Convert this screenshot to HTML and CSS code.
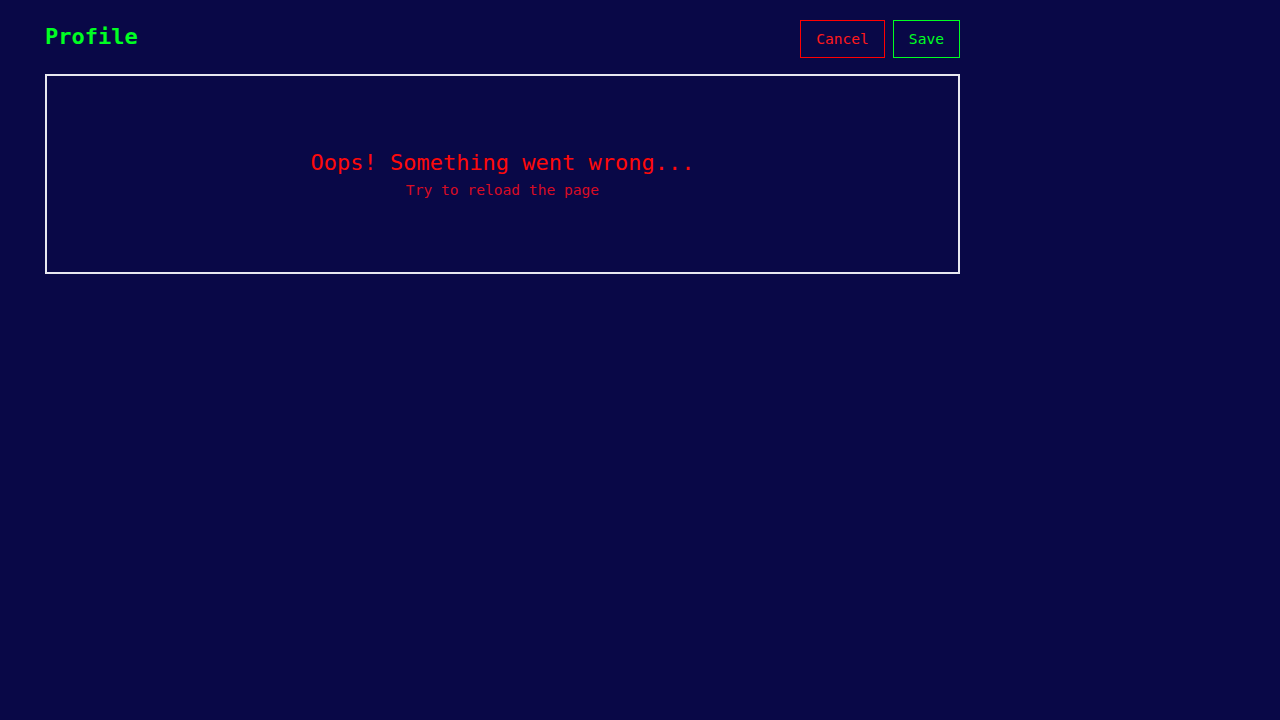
FILE: index.html
```html
<!DOCTYPE html>
<html>
<head>
<meta charset="utf-8">
<link rel="stylesheet" href="styles.css">
</head>
<body>
<div class="page">
  <header class="header">
    <h1 class="title">Profile</h1>
    <div class="actions">
      <button class="btn btn-cancel">Cancel</button>
      <button class="btn btn-save">Save</button>
    </div>
  </header>
  <section class="card">
    <div class="error">
      <div class="error-title">Oops! Something went wrong...</div>
      <div class="error-sub">Try to reload the page</div>
    </div>
  </section>
</div>
</body>
</html>
```
FILE: styles.css
```css
html, body {
  margin: 0;
  padding: 0;
  background: #090847;
  height: 100%;
}
body {
  font-family: "DejaVu Sans Mono", "Liberation Mono", monospace;
}
.page {
  width: 915px;
  margin-left: 45px;
  padding-top: 20px;
}
.header {
  display: flex;
  justify-content: space-between;
  align-items: flex-start;
}
.title {
  margin: 0;
  padding-top: 1px;
  font-size: 22px;
  line-height: 32px;
  font-weight: 600;
  color: #00ff22;
}
.actions {
  display: flex;
  gap: 8px;
}
.btn {
  height: 38px;
  padding: 0 15px 2px;
  background: transparent;
  font-family: inherit;
  font-size: 14.6px;
  border: 1px solid;
  cursor: pointer;
}
.btn-cancel {
  color: #ff1a1a;
  border-color: #ff0000;
}
.btn-save {
  color: #00ff22;
  border-color: #00ff22;
}
.card {
  margin-top: 16px;
  height: 200px;
  box-sizing: border-box;
  border: 2px solid #e8e8f0;
  display: flex;
  align-items: center;
  justify-content: center;
}
.error {
  text-align: center;
}
.error-title {
  color: #ff0a0a;
  font-size: 22px;
  line-height: 30px;
}
.error-sub {
  color: #d80c24;
  font-size: 14.6px;
  line-height: 20px;
  padding-top: 2px;
}
```
